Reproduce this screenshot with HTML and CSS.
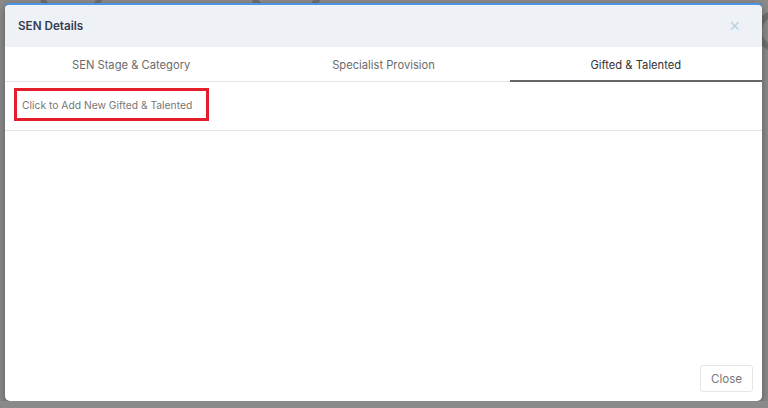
FILE: index.html
```html
<!DOCTYPE html>
<html lang="en">

<head>
    <meta charset="UTF-8">
    <meta name="viewport" content="width=device-width, initial-scale=1.0">
    <title>SEN Details</title>
    <link rel="stylesheet" href="styles.css">
</head>

<body>
    <div class="backdrop">
        <div class="shape shape_a"></div>
        <div class="shape shape_b"></div>
        <div class="shape shape_c"></div>
    </div>
    <div class="modal">
        <div class="modal_header">
            <span class="modal_title">SEN Details</span>
            <button class="modal_x">&times;</button>
        </div>
        <div class="tabs">
            <div class="tab">SEN Stage &amp; Category</div>
            <div class="tab">Specialist Provision</div>
            <div class="tab active">Gifted &amp; Talented</div>
        </div>
        <div class="add_row">
            <button class="add_btn">Click to Add New Gifted &amp; Talented</button>
        </div>
        <div class="modal_body"></div>
        <div class="modal_footer">
            <button class="close_btn">Close</button>
        </div>
    </div>
</body>

</html>
```

FILE: styles.css
```css
body {
    margin: 0;
    background-color: #8a8a8a;
    font-family: Inter, "Noto Sans", sans-serif;
    overflow: hidden;
}

.backdrop {
    position: absolute;
    inset: 0;
}

.shape {
    position: absolute;
    border: 6px solid #6f6f6f;
    border-radius: 50%;
}

.shape_a {
    left: 40px;
    top: -30px;
    width: 50px;
    height: 40px;
}

.shape_b {
    left: 250px;
    top: -34px;
    width: 60px;
    height: 40px;
}

.shape_c {
    left: 756px;
    top: 10px;
    width: 30px;
    height: 30px;
}

.modal {
    position: relative;
    margin: 3px 0 0 5px;
    width: 757px;
    height: 398px;
    box-sizing: border-box;
    background-color: #fff;
    border-top: 2px solid #4d93e6;
    border-radius: 5px;
    box-shadow: 0 3px 8px rgba(0, 0, 0, 0.35);
    display: flex;
    flex-direction: column;
    overflow: hidden;
}

.modal_header {
    height: 42px;
    background-color: #eef2f7;
    display: flex;
    align-items: center;
    justify-content: space-between;
    padding: 0 22px 0 13px;
}

.modal_title {
    font-size: 11.7px;
    font-weight: 600;
    color: #343d52;
}

.modal_x {
    border: none;
    background: none;
    padding: 0;
    font-size: 18px;
    line-height: 18px;
    color: #b5d3e4;
    font-family: Arial, "Liberation Sans", sans-serif;
}

.tabs {
    display: grid;
    grid-template-columns: 1fr 1fr 1fr;
    height: 35px;
}

.tab {
    display: flex;
    align-items: center;
    justify-content: center;
    padding-top: 2px;
    font-size: 11.2px;
    color: #6b6b6b;
    border-bottom: 1px solid #e4e4e4;
}

.tab.active {
    color: #333;
    border-bottom: 2px solid #666;
}

.add_row {
    padding: 6px 9px 9px;
    border-bottom: 1px solid #e2e2e2;
}

.add_btn {
    height: 33px;
    width: 195px;
    box-sizing: border-box;
    border: 3px solid #e41e2b;
    background: #fff;
    text-align: left;
    padding: 0 0 0 5px;
    font-family: Inter, "Noto Sans", sans-serif;
    font-size: 10.3px;
    color: #777;
}

.modal_body {
    flex: 1;
}

.modal_footer {
    display: flex;
    justify-content: flex-end;
    padding: 0 9px 9px 0;
}

.close_btn {
    width: 53px;
    height: 27px;
    background: #fff;
    border: 1px solid #e6e6e6;
    border-radius: 3px;
    font-family: Inter, "Noto Sans", sans-serif;
    font-size: 11.6px;
    color: #777;
}
```
